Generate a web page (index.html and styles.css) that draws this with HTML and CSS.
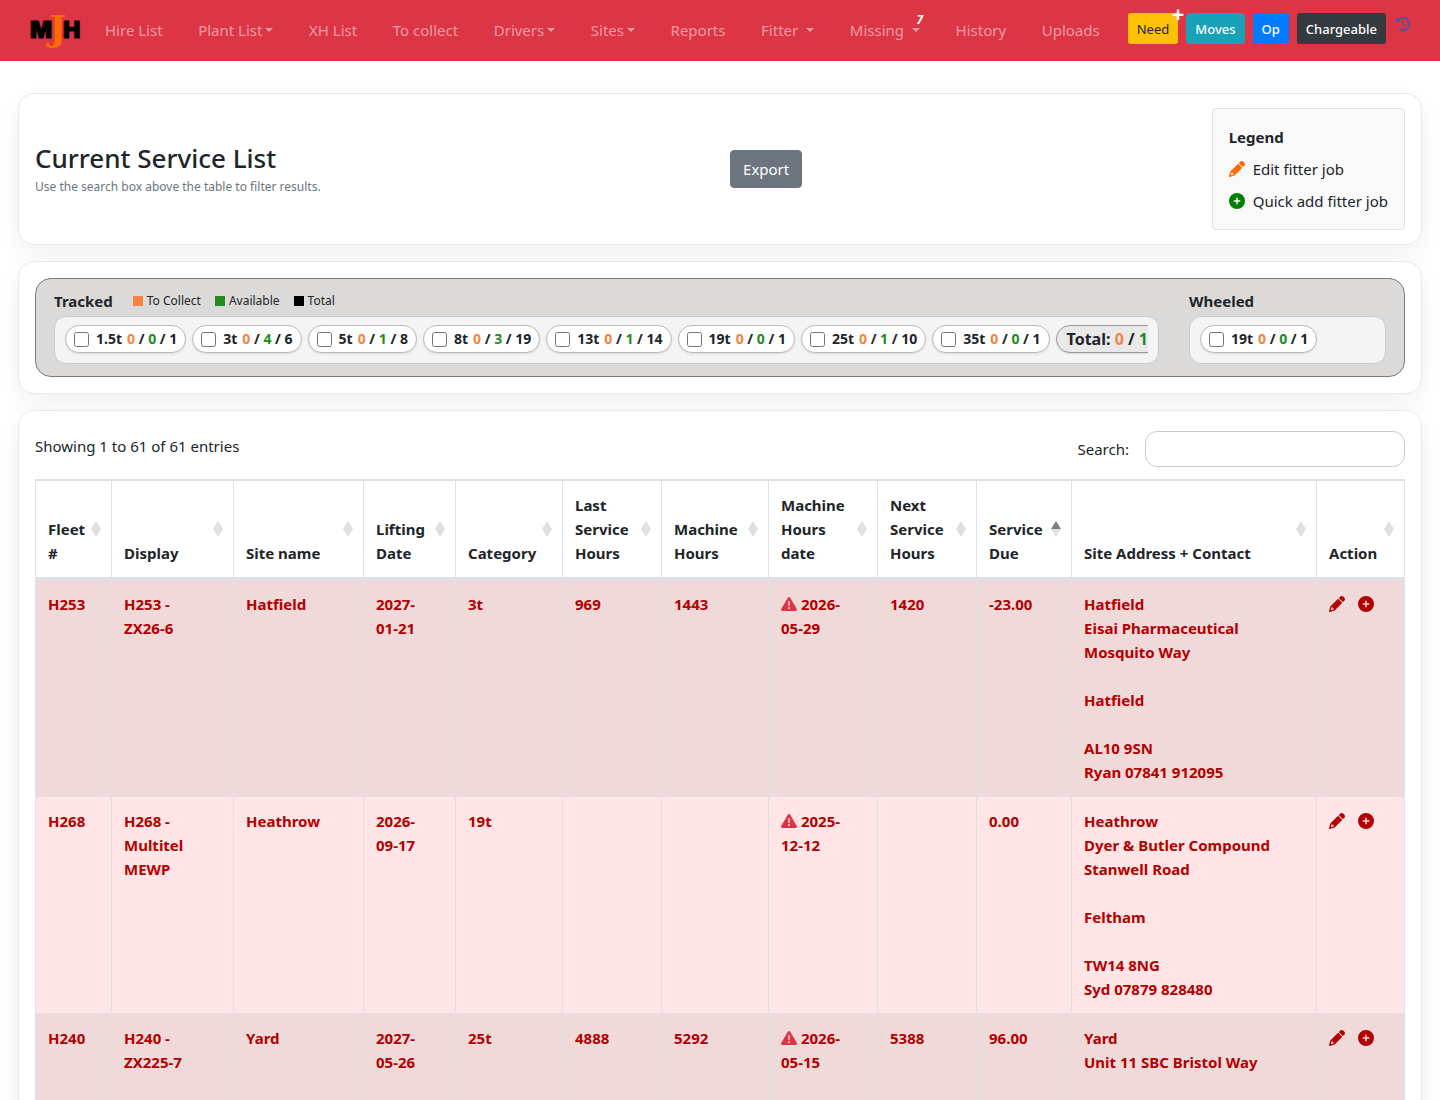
FILE: index.html
```html
<!DOCTYPE html>
<html lang="en">
<head>
    <meta charset="UTF-8">
    <meta name="viewport" content="width=device-width, initial-scale=1.0">
    <title>Current Service List</title>
    <link rel="stylesheet" href="styles.css">
</head>
<body>
    <!-- shared icons -->
    <svg class="icon-defs" aria-hidden="true">
        <symbol id="icon-pencil" viewBox="0 0 512 512">
            <path d="M410.3 231l11.3-11.3-33.9-33.9-62.1-62.1L291.7 89.8l-11.3 11.3-22.6 22.6L58.6 322.9c-10.4 10.4-18 23.3-22.2 37.4L1 480.7c-2.5 8.4-.2 17.5 6.1 23.7s15.3 8.5 23.7 6.1l120.3-35.4c14.1-4.2 27-11.8 37.4-22.2L387.7 253.7 410.3 231zM160 399.4l-9.1 22.7c-4 3.1-8.5 5.4-13.3 6.9L59.4 452l23-78.1c1.4-4.9 3.8-9.4 6.9-13.3l22.7-9.1v32c0 8.8 7.2 16 16 16h32zM362.7 18.7L348.3 33.2 325.7 55.8 314.3 67.1l33.9 33.9 62.1 62.1 33.9 33.9 11.3-11.3 22.6-22.6 14.5-14.5c25-25 25-65.5 0-90.5L453.3 18.7c-25-25-65.5-25-90.5 0z"/>
        </symbol>
        <symbol id="icon-plus" viewBox="0 0 512 512">
            <path d="M256 512A256 256 0 1 0 256 0a256 256 0 1 0 0 512zM232 344V280H168c-13.3 0-24-10.7-24-24s10.7-24 24-24h64V168c0-13.3 10.7-24 24-24s24 10.7 24 24v64h64c13.3 0 24 10.7 24 24s-10.7 24-24 24H280v64c0 13.3-10.7 24-24 24s-24-10.7-24-24z"/>
        </symbol>
        <symbol id="icon-warning" viewBox="0 0 512 512">
            <path d="M256 32c14.2 0 27.3 7.5 34.5 19.8l216 368c7.3 12.4 7.3 27.7 .2 40.1S486.3 480 472 480H40c-14.3 0-27.6-7.7-34.7-20.1s-7-27.8 .2-40.1l216-368C228.7 39.5 241.8 32 256 32zm0 128c-13.3 0-24 10.7-24 24V296c0 13.3 10.7 24 24 24s24-10.7 24-24V184c0-13.3-10.7-24-24-24zm32 224a32 32 0 1 0 -64 0 32 32 0 1 0 64 0z"/>
        </symbol>
        <symbol id="icon-history" viewBox="0 0 512 512">
            <path d="M75 75L41 41C25.9 25.9 0 36.6 0 57.9V168c0 13.3 10.7 24 24 24H134.1c21.4 0 32.1-25.9 17-41l-30.8-30.8C155 85.5 203 64 256 64c106 0 192 86 192 192s-86 192-192 192c-40.8 0-78.6-12.7-109.7-34.4c-14.5-10.1-34.4-6.6-44.6 7.9s-6.6 34.4 7.9 44.6C151.2 495 201.7 512 256 512c141.4 0 256-114.6 256-256S397.4 0 256 0C185.3 0 121.3 28.7 75 75zm181 53c-13.3 0-24 10.7-24 24V256c0 6.4 2.5 12.5 7 17l72 72c9.4 9.4 24.6 9.4 33.9 0s9.4-24.6 0-33.9l-65-65V152c0-13.3-10.7-24-24-24z"/>
        </symbol>
    </svg>

    <nav class="navbar">
        <a href="#" class="brand" aria-label="MJH">
            <svg viewBox="0 0 52 36" width="52" height="36">
                <text x="0" y="25" class="logo-dark">M</text>
                <text x="33" y="25" class="logo-dark">H</text>
                <text x="19" y="28" class="logo-orange">J</text>
            </svg>
        </a>
        <div class="nav-links">
            <a href="#">Hire List</a>
            <a href="#" class="dropdown">Plant List</a>
            <a href="#">XH List</a>
            <a href="#">To collect</a>
            <a href="#" class="dropdown">Drivers</a>
            <a href="#" class="dropdown">Sites</a>
            <a href="#">Reports</a>
            <a href="#" class="dropdown spaced">Fitter</a>
            <a href="#" class="dropdown spaced">Missing<span class="nav-badge">7</span></a>
            <a href="#">History</a>
            <a href="#">Uploads</a>
        </div>
        <div class="nav-buttons">
            <button type="button" class="btn btn-warning">Need<span class="btn-plus">+</span></button>
            <button type="button" class="btn btn-info">Moves</button>
            <button type="button" class="btn btn-primary">Op</button>
            <button type="button" class="btn btn-dark">Chargeable</button>
        </div>
        <a href="#" class="nav-history" aria-label="Recent changes"><svg><use href="#icon-history"/></svg></a>
    </nav>

    <main class="page">
        <section class="card page-header">
            <div>
                <h1>Current Service List</h1>
                <p class="hint">Use the search box above the table to filter results.</p>
            </div>
            <button type="button" class="btn-export">Export</button>
            <div class="legend">
                <strong>Legend</strong>
                <div class="legend-row"><svg class="icon orange"><use href="#icon-pencil"/></svg>Edit fitter job</div>
                <div class="legend-row"><svg class="icon green"><use href="#icon-plus"/></svg>Quick add fitter job</div>
            </div>
        </section>

        <section class="card">
            <div class="filters">
                <div class="filter-group">
                    <div class="filter-head">
                        <h2>Tracked</h2>
                        <span class="key key-collect">To Collect</span>
                        <span class="key key-available">Available</span>
                        <span class="key key-total">Total</span>
                    </div>
                    <div class="filter-box">
                        <div class="pills">
                            <label class="pill"><input type="checkbox">1.5t <span><b class="c">0</b> / <b class="a">0</b> / 1</span></label>
                            <label class="pill"><input type="checkbox">3t <span><b class="c">0</b> / <b class="a">4</b> / 6</span></label>
                            <label class="pill"><input type="checkbox">5t <span><b class="c">0</b> / <b class="a">1</b> / 8</span></label>
                            <label class="pill"><input type="checkbox">8t <span><b class="c">0</b> / <b class="a">3</b> / 19</span></label>
                            <label class="pill"><input type="checkbox">13t <span><b class="c">0</b> / <b class="a">1</b> / 14</span></label>
                            <label class="pill"><input type="checkbox">19t <span><b class="c">0</b> / <b class="a">0</b> / 1</span></label>
                            <label class="pill"><input type="checkbox">25t <span><b class="c">0</b> / <b class="a">1</b> / 10</span></label>
                            <label class="pill"><input type="checkbox">35t <span><b class="c">0</b> / <b class="a">0</b> / 1</span></label>
                            <div class="pill pill-total"><span>Total: <b class="c">0</b> / <b class="a">10</b> / 60</span></div>
                        </div>
                    </div>
                </div>
                <div class="filter-group">
                    <div class="filter-head">
                        <h2>Wheeled</h2>
                    </div>
                    <div class="filter-box">
                        <div class="pills">
                            <label class="pill"><input type="checkbox">19t <span><b class="c">0</b> / <b class="a">0</b> / 1</span></label>
                        </div>
                    </div>
                </div>
            </div>
        </section>

        <section class="card">
            <div class="table-tools">
                <div class="table-info">Showing 1 to 61 of 61 entries</div>
                <div class="search">
                    <label for="search">Search:</label>
                    <input type="search" id="search">
                </div>
            </div>
            <table>
                <colgroup>
                    <col class="w-fleet">
                    <col class="w-display">
                    <col class="w-site">
                    <col class="w-lifting">
                    <col class="w-category">
                    <col class="w-last">
                    <col class="w-machine">
                    <col class="w-date">
                    <col class="w-last">
                    <col class="w-due">
                    <col class="w-address">
                    <col class="w-action">
                </colgroup>
                <thead>
                    <tr>
                        <th>Fleet #</th>
                        <th>Display</th>
                        <th>Site name</th>
                        <th>Lifting Date</th>
                        <th>Category</th>
                        <th>Last Service Hours</th>
                        <th>Machine Hours</th>
                        <th>Machine Hours date</th>
                        <th>Next Service Hours</th>
                        <th class="sorted" aria-sort="ascending">Service Due</th>
                        <th>Site Address + Contact</th>
                        <th>Action</th>
                    </tr>
                </thead>
                <tbody>
                    <tr>
                        <td>H253</td>
                        <td>H253 - ZX26-6</td>
                        <td>Hatfield</td>
                        <td>2027-01-21</td>
                        <td>3t</td>
                        <td>969</td>
                        <td>1443</td>
                        <td><svg class="icon red"><use href="#icon-warning"/></svg> 2026-05-29</td>
                        <td>1420</td>
                        <td>-23.00</td>
                        <td>Hatfield<br>Eisai Pharmaceutical<br>Mosquito Way<br><br>Hatfield<br><br>AL10 9SN<br>Ryan 07841 912095</td>
                        <td>
                            <div class="actions">
                                <a href="#" aria-label="Edit fitter job"><svg class="icon"><use href="#icon-pencil"/></svg></a>
                                <a href="#" aria-label="Quick add fitter job"><svg class="icon"><use href="#icon-plus"/></svg></a>
                            </div>
                        </td>
                    </tr>
                    <tr>
                        <td>H268</td>
                        <td>H268 - Multitel MEWP</td>
                        <td>Heathrow</td>
                        <td>2026-09-17</td>
                        <td>19t</td>
                        <td></td>
                        <td></td>
                        <td><svg class="icon red"><use href="#icon-warning"/></svg> 2025-12-12</td>
                        <td></td>
                        <td>0.00</td>
                        <td>Heathrow<br>Dyer &amp; Butler Compound<br>Stanwell Road<br><br>Feltham<br><br>TW14 8NG<br>Syd 07879 828480</td>
                        <td>
                            <div class="actions">
                                <a href="#" aria-label="Edit fitter job"><svg class="icon"><use href="#icon-pencil"/></svg></a>
                                <a href="#" aria-label="Quick add fitter job"><svg class="icon"><use href="#icon-plus"/></svg></a>
                            </div>
                        </td>
                    </tr>
                    <tr>
                        <td>H240</td>
                        <td>H240 - ZX225-7</td>
                        <td>Yard</td>
                        <td>2027-05-26</td>
                        <td>25t</td>
                        <td>4888</td>
                        <td>5292</td>
                        <td><svg class="icon red"><use href="#icon-warning"/></svg> 2026-05-15</td>
                        <td>5388</td>
                        <td>96.00</td>
                        <td>Yard<br>Unit 11 SBC Bristol Way</td>
                        <td>
                            <div class="actions">
                                <a href="#" aria-label="Edit fitter job"><svg class="icon"><use href="#icon-pencil"/></svg></a>
                                <a href="#" aria-label="Quick add fitter job"><svg class="icon"><use href="#icon-plus"/></svg></a>
                            </div>
                        </td>
                    </tr>
                </tbody>
            </table>
        </section>
    </main>
</body>
</html>
```

FILE: styles.css
```css
:root {
    --red: #dc3545;
    --text: #212529;
    --muted: #6c757d;
    --line: #dee2e6;
    --collect: #f58442;
    --available: #228b22;
    --overdue: #b30000;
}

* {
    box-sizing: border-box;
}

body {
    margin: 0;
    height: 100vh;
    overflow-x: hidden;
    overflow-y: auto;
    scrollbar-width: none;
    font-family: 'Segoe UI', 'Noto Sans', 'Open Sans', sans-serif;
    font-size: 15px;
    line-height: 24px;
    color: var(--text);
    background: #fff;
}

button,
input {
    font: inherit;
}

b {
    font-weight: 700;
}

.icon-defs {
    position: absolute;
    width: 0;
    height: 0;
}

.icon {
    width: 16px;
    height: 16px;
    fill: currentColor;
    flex: none;
}

.orange { color: #ff6a00; }
.green { color: #008000; }
.red { color: var(--red); }

/* navbar */
.navbar {
    display: flex;
    align-items: center;
    height: 61px;
    padding: 0 30px;
    background: var(--red);
}

.brand,
.brand svg {
    display: block;
    overflow: visible;
}

.logo-dark {
    font-family: Inter, sans-serif;
    font-size: 23px;
    font-weight: 900;
    fill: #000;
    stroke: #000;
}

.logo-orange {
    font-family: 'DejaVu Serif', serif;
    font-size: 36px;
    font-weight: 700;
    fill: #ff6a00;
}

.nav-links {
    flex: 1;
    display: flex;
    justify-content: space-between;
    padding: 0 28px 2px 23px;
}

.nav-links a {
    position: relative;
    color: rgba(255, 255, 255, 0.5);
    text-decoration: none;
    white-space: nowrap;
}

.dropdown::after {
    content: '';
    display: inline-block;
    margin-left: 3px;
    vertical-align: 4px;
    border-top: 4px solid;
    border-left: 4px solid transparent;
    border-right: 4px solid transparent;
}

.dropdown.spaced::after {
    margin-left: 8px;
}

.nav-badge {
    position: absolute;
    top: -6px;
    right: -3px;
    font-size: 12px;
    line-height: 16px;
    font-weight: 700;
    font-style: italic;
    color: #fff;
}

.nav-buttons {
    display: flex;
    gap: 8px;
    margin-bottom: 4px;
}

.btn {
    position: relative;
    height: 31px;
    padding: 0 8px;
    border: 1px solid transparent;
    border-radius: 3px;
    font-size: 13px;
    font-weight: 500;
    color: #fff;
}

.btn-warning {
    background: #ffc107;
    color: var(--text);
    font-weight: 400;
}

.btn-info { background: #17a2b8; }
.btn-primary { background: #007bff; }
.btn-dark { background: #343a40; }

.btn-plus {
    position: absolute;
    top: -13px;
    right: -7px;
    font-size: 22px;
    line-height: 24px;
    font-weight: 700;
    color: #fff;
}

.nav-history {
    margin: 0 0 14px 10px;
}

.nav-history svg {
    display: block;
    width: 14px;
    height: 14px;
    fill: #485a9f;
}

/* cards */
.page {
    display: flex;
    flex-direction: column;
    gap: 16px;
    padding: 32px 18px;
}

.card {
    padding: 16px;
    border: 1px solid #e9e9e9;
    border-radius: 16px;
    background: #fff;
    box-shadow: 0 8px 24px rgba(0, 0, 0, 0.06);
}

.page-header {
    display: flex;
    justify-content: space-between;
    align-items: center;
    padding: 14px 16px;
}

h1 {
    margin: 0 0 2px;
    font-size: 26px;
    line-height: 34px;
    font-weight: 500;
}

.hint {
    margin: 0;
    font-size: 12px;
    line-height: 20px;
    color: var(--muted);
}

.btn-export {
    height: 38px;
    padding: 0 12px;
    border: 1px solid var(--muted);
    border-radius: 4px;
    background: var(--muted);
    color: #fff;
}

.legend {
    display: flex;
    flex-direction: column;
    gap: 8px;
    padding: 16px;
    border: 1px solid var(--line);
    border-radius: 4px;
    background: #f9f9f9;
}

.legend-row {
    display: flex;
    align-items: center;
    gap: 8px;
}

/* filters */
.filters {
    display: grid;
    grid-template-columns: minmax(0, 1fr) 197px;
    gap: 30px;
    padding: 10px 18px 12px;
    border: 1px solid #7b7b78;
    border-radius: 16px;
    background: #dbdad8;
}

.filter-head {
    display: flex;
    align-items: center;
    gap: 14px;
    margin-bottom: 3px;
}

h2 {
    margin: 0 6px 0 0;
    font-size: 15px;
    line-height: 24px;
    font-weight: 700;
}

.key {
    display: flex;
    align-items: center;
    gap: 4px;
    font-size: 12px;
}

.key::before {
    content: '';
    width: 10px;
    height: 10px;
    background: #000;
}

.key-collect::before { background: var(--collect); }
.key-available::before { background: var(--available); }

.filter-box {
    padding: 8px 10px;
    border: 1px solid #ccc;
    border-radius: 12px;
    background: #f4f4f4;
}

.pills {
    display: flex;
    gap: 6px;
    padding-bottom: 2px;
    overflow: hidden;
}

.pill {
    flex: none;
    display: flex;
    align-items: center;
    gap: 5px;
    height: 28px;
    padding: 0 8px;
    border: 1px solid #bbb;
    border-radius: 14px;
    background: #fff;
    box-shadow: 0 1px 2px rgba(0, 0, 0, 0.1);
    font-size: 14px;
    font-weight: 700;
    white-space: nowrap;
}

.pill input {
    width: 15px;
    height: 15px;
    margin: 0 2px 0 0;
}

.pill-total {
    padding: 0 10px;
    border-color: #999;
    background: #e9e9e9;
    font-size: 16px;
}

.c { color: var(--collect); }
.a { color: var(--available); }

/* table */
.table-tools {
    display: flex;
    justify-content: space-between;
    padding: 4px 0 12px;
}

.table-info {
    padding-top: 3px;
}

.search {
    display: flex;
    align-items: center;
    gap: 16px;
}

.search input {
    width: 260px;
    height: 36px;
    padding: 4px 12px;
    border: 1px solid #ccc;
    border-radius: 12px;
    background: #fff;
}

table {
    width: 100%;
    table-layout: fixed;
    border-collapse: separate;
    border-spacing: 0;
}

.w-fleet { width: 76px; }
.w-display { width: 122px; }
.w-site { width: 130px; }
.w-lifting { width: 92px; }
.w-category { width: 107px; }
.w-last { width: 99px; }
.w-machine { width: 107px; }
.w-date { width: 109px; }
.w-due { width: 95px; }
.w-address { width: 245px; }
.w-action { width: 89px; }

th,
td {
    padding: 12px 24px 12px 12px;
    border-left: 1px solid var(--line);
    text-align: left;
    font-weight: 700;
}

th:last-child,
td:last-child {
    border-right: 1px solid var(--line);
}

th {
    position: relative;
    border-top: 2px solid var(--line);
    border-bottom: 2px solid var(--line);
    vertical-align: bottom;
}

/* sort arrows */
th::before,
th::after {
    content: '';
    position: absolute;
    right: 10px;
    border-left: 5px solid transparent;
    border-right: 5px solid transparent;
}

th::before {
    bottom: 50%;
    border-bottom: 8px solid #e0e0e0;
}

th::after {
    top: 50%;
    border-top: 8px solid #e0e0e0;
}

th.sorted::before {
    border-bottom-color: #7a7d80;
}

td {
    height: 217px;
    border-top: 1px solid var(--line);
    vertical-align: top;
    color: var(--overdue);
    background: #ffe5e5;
}

tr:nth-child(odd) td {
    background: #f0d9d9;
}

td .icon {
    vertical-align: -2px;
}

.actions {
    display: flex;
    align-items: center;
    gap: 13px;
    height: 24px;
}

.actions a {
    display: flex;
    color: var(--overdue);
}
```
